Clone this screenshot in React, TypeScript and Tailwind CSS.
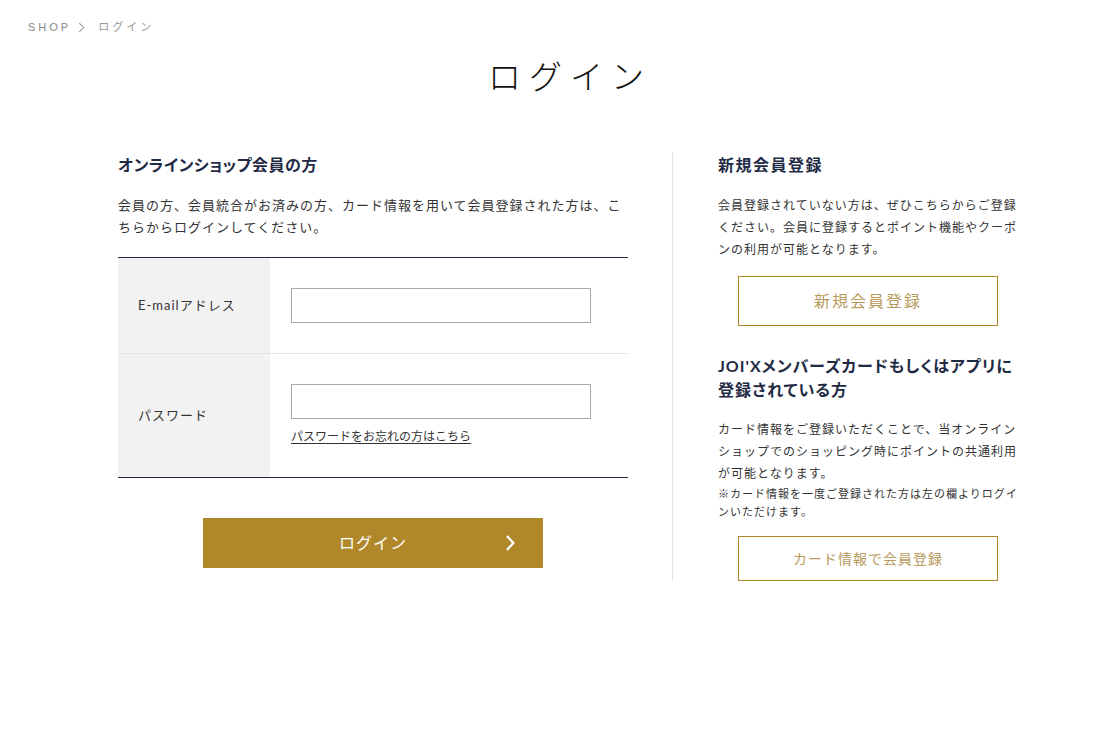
import React from 'react';

const jp = "font-['Lato','Noto_Sans_CJK_JP',sans-serif]";

function Chevron({ className }: { className?: string }) {
  return (
    <svg viewBox="0 0 8 14" className={className} fill="none" stroke="currentColor" strokeWidth={2} strokeLinecap="square">
      <path d="M1.5 1.5 L6.5 7 L1.5 12.5" />
    </svg>
  );
}

export default function App() {
  return (
    <div className={`min-h-screen bg-white text-[#333] ${jp}`}>
      {/* breadcrumb */}
      <nav className="px-[28px] pt-[19px] flex items-center h-[35px] text-[11px] leading-[16px] tracking-[3px]">
        <span className="text-[#888] font-['Liberation_Sans','Noto_Sans_CJK_JP',sans-serif]">SHOP</span>
        <svg viewBox="0 0 8 12" className="w-[7px] h-[11px] ml-[7px] mr-[13px] text-[#999]" fill="none" stroke="currentColor" strokeWidth={1.2}>
          <path d="M1.5 1 L6.5 6 L1.5 11" />
        </svg>
        <span className="text-[#999]">ログイン</span>
      </nav>

      <div className="w-[900px] ml-[118px]">
        <h1 className="mt-[25px] text-center text-[33px] leading-[33px] font-light tracking-[8px] pl-[4px] text-[#111]">
          ログイン
        </h1>

        <div className="flex mt-[60px]">
          {/* left */}
          <section className="w-[510px] shrink-0">
            <h2 className="text-[16px] leading-[24px] font-bold tracking-[0.5px] text-[#1f2b45] [font-feature-settings:'palt']">
              オンラインショップ会員の方
            </h2>
            <p className="mt-[17px] text-[13px] leading-[22px] tracking-[1px]">
              会員の方、会員統合がお済みの方、カード情報を用いて会員登録された方は、こちらからログインしてください。
            </p>

            <div className="mt-[19px] border-t border-b border-[#1f2b45]">
              <div className="flex border-b border-[#e3e3e3]">
                <div className="w-[152px] shrink-0 bg-[#f2f2f2] flex items-center pl-[20px] text-[13px] tracking-[1px]">
                  E-mailアドレス
                </div>
                <div className="pl-[21px] py-[30px]">
                  <input type="text" className="block w-[300px] h-[35px] border border-[#aaa] outline-none px-2" />
                </div>
              </div>
              <div className="flex">
                <div className="w-[152px] shrink-0 bg-[#f2f2f2] flex items-center pl-[20px] text-[13px] tracking-[1px]">
                  パスワード
                </div>
                <div className="pl-[21px] pt-[30px] pb-[32px]">
                  <input type="password" className="block w-[300px] h-[35px] border border-[#aaa] outline-none px-2" />
                  <a href="#" className="block mt-[10px] text-[12px] leading-[16px] tracking-[0px] underline underline-offset-2 text-[#333]">
                    パスワードをお忘れの方はこちら
                  </a>
                </div>
              </div>
            </div>

            <button className="relative mt-[40px] mx-auto flex items-center justify-center w-[340px] h-[50px] bg-[#b0882a] text-white text-[16px] tracking-[1px]">
              ログイン
              <Chevron className="absolute right-[28px] top-1/2 -translate-y-1/2 w-[9px] h-[16px]" />
            </button>
          </section>

          <div className="w-px bg-[#e3e3e3] ml-[44px] mr-[45px] shrink-0" />

          {/* right */}
          <section className="w-[300px] shrink-0">
            <h2 className="text-[16px] leading-[24px] font-bold tracking-[1.5px] text-[#1f2b45] [font-feature-settings:'palt']">
              新規会員登録
            </h2>
            <p className="mt-[18px] text-[12px] leading-[22px] tracking-[1px]">
              会員登録されていない方は、ぜひこちらからご登録ください。会員に登録するとポイント機能やクーポンの利用が可能となります。
            </p>
            <button className="mt-[15px] mx-auto flex items-center justify-center w-[260px] h-[50px] border border-[#b0882a] text-[#b89a5c] text-[16px] tracking-[2px]">
              新規会員登録
            </button>

            <h2 className="mt-[28px] text-[16px] leading-[24px] font-bold tracking-[1px] text-[#1f2b45] [font-feature-settings:'palt']">
              JOI'Xメンバーズカードもしくはアプリに登録されている方
            </h2>
            <p className="mt-[17px] text-[12px] leading-[22px] tracking-[1px]">
              カード情報をご登録いただくことで、当オンラインショップでのショッピング時にポイントの共通利用が可能となります。
            </p>
            <p className="text-[11px] leading-[18px] tracking-[1px]">
              ※カード情報を一度ご登録された方は左の欄よりログインいただけます。
            </p>
            <button className="mt-[15px] mx-auto flex items-center justify-center w-[260px] h-[45px] border border-[#b0882a] text-[#b89a5c] text-[14px] tracking-[1px]">
              カード情報で会員登録
            </button>
          </section>
        </div>
      </div>
    </div>
  );
}
